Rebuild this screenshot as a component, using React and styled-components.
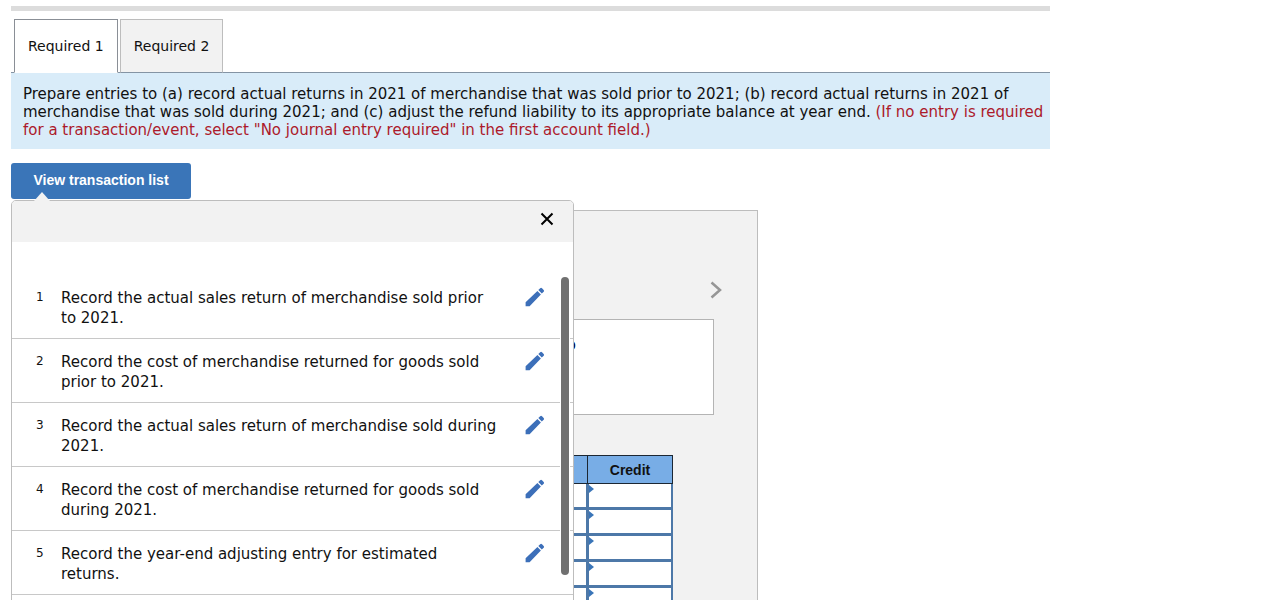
import React from "react";
import styled, { createGlobalStyle } from "styled-components";

const BLUE = "#3a75b8";
const GRID = "#4d78a8";

const GlobalStyle = createGlobalStyle`
  *, *::before, *::after { box-sizing: border-box; }
  body {
    margin: 0;
    background: #fff;
    color: #111;
    font-family: Verdana, "DejaVu Sans", sans-serif;
    font-size: 15px;
  }
  button, input { font: inherit; color: inherit; margin: 0; }
`;

const Page = styled.main`
  height: 100vh;
  overflow: hidden;
  padding: 6px 11px 0;
`;

const Content = styled.div`
  max-width: 1039px;
`;

const Rule = styled.div`
  height: 5px;
  background: #dcdcdc;
`;

const Tabs = styled.div`
  display: flex;
  gap: 2px;
  margin-top: 8px;
  padding-left: 3px;
  border-bottom: 1px solid #8494a4;
`;

const Tab = styled.button`
  height: 54px;
  padding: 0 13px;
  margin-bottom: -1px;
  font-size: 14px;
  white-space: nowrap;
  border: 1px solid ${(p) => (p.$active ? "#8a8f96" : "#bdbdbd")};
  border-bottom-color: ${(p) => (p.$active ? "#fff" : "#8494a4")};
  background: ${(p) => (p.$active ? "#fff" : "#f2f2f2")};
`;

const Instructions = styled.p`
  margin: 0;
  padding: 12px 4px 10px 12px;
  line-height: 18px;
  background: #d9ecf9;
`;

const Hint = styled.span`
  color: #ac1a2b;
`;

const ListAnchor = styled.div`
  position: relative;
  margin-top: 14px;
`;

const ListButton = styled.button`
  display: block;
  width: 180px;
  height: 36px;
  padding: 0 0 2px;
  border: 0;
  border-radius: 3px;
  background: ${BLUE};
  color: #fff;
  font: bold 14px "Liberation Sans", Arial, sans-serif;
`;

const Popover = styled.section`
  position: absolute;
  z-index: 2;
  top: 37px;
  left: 0;
  width: 563px;
  border: 1px solid #bdbdbd;
  border-radius: 5px 5px 0 0;
  background: #fff;

  &::before {
    content: "";
    position: absolute;
    top: -9px;
    left: 22px;
    border: 8px solid transparent;
    border-top: 0;
    border-bottom: 9px solid #f2f2f2;
  }
`;

const PopoverHeader = styled.header`
  display: flex;
  justify-content: flex-end;
  height: 41px;
  padding: 8px 16px;
  border-radius: 4px 4px 0 0;
  background: #f2f2f2;
`;

const IconButton = styled.button`
  display: grid;
  place-items: center;
  width: 20px;
  height: 20px;
  padding: 0;
  border: 0;
  background: none;
`;

const ScrollArea = styled.div`
  position: relative;
  padding-top: 33px;
`;

const ScrollThumb = styled.div`
  position: absolute;
  top: 35px;
  right: 3px;
  width: 10px;
  height: 298px;
  border: solid #fff;
  border-width: 0 1px;
  background: #fff;

  &::after {
    content: "";
    display: block;
    height: 100%;
    border-radius: 4px;
    background: #707070;
  }
`;

const Transactions = styled.ol`
  margin: 0;
  padding: 0;
  list-style: none;
`;

const Transaction = styled.li`
  display: flex;
  align-items: flex-start;
  height: 64px;
  padding: 12px 28px 0 24px;
  border-bottom: 1px solid #c8c8c8;
`;

const Number = styled.span`
  width: 25px;
  padding-top: 1px;
  font-size: 12px;
  line-height: 18px;
`;

const Description = styled.span`
  width: 436px;
  margin-right: auto;
  padding-top: 1px;
  line-height: 20px;
`;

const Worksheet = styled.section`
  width: 747px;
  min-height: 480px;
  margin-top: 11px;
  padding: 69px 31px 0 43px;
  border: 1px solid #bdbdbd;
  background: #f2f2f2;
`;

const Pager = styled.div`
  display: flex;
  justify-content: flex-end;
  height: 39px;
`;

const Prompt = styled.div`
  display: flex;
  height: 96px;
  margin-right: 12px;
  padding: 16px 137px 0 0;
  justify-content: flex-end;
  border: 1px solid #b4b4b4;
  background: #fff;
  color: #000033;
`;

const Journal = styled.table`
  width: 618px;
  margin-top: 40px;
  border-collapse: separate;
  border-spacing: 0;
  table-layout: fixed;
`;

const HeadCell = styled.th`
  width: ${(p) => p.$width || "auto"};
  height: 29px;
  padding: 0;
  border: solid #1c2733;
  border-width: 1px 0 1px 1px;
  background: #78ade6;
  font: bold 14px "Liberation Sans", Arial, sans-serif;

  &:last-child { border-right-width: 1px; }
`;

const Cell = styled.td`
  position: relative;
  height: 26px;
  padding: 0;
  border: solid ${GRID};
  border-width: 0 1px 3px 2px;
  background: #fff;

  &:last-child { border-right-width: 2px; }

  &::before {
    content: "";
    position: absolute;
    top: 1px;
    left: 0;
    border: 4px solid transparent;
    border-left: 5px solid ${BLUE};
    border-right: 0;
  }
`;

const Amount = styled.input`
  display: block;
  width: 100%;
  height: 23px;
  padding: 0 6px;
  border: 0;
  outline: 0;
  background: transparent;
  text-align: right;
`;

const transactions = [
  "Record the actual sales return of merchandise sold prior to 2021.",
  "Record the cost of merchandise returned for goods sold prior to 2021.",
  "Record the actual sales return of merchandise sold during 2021.",
  "Record the cost of merchandise returned for goods sold during 2021.",
  "Record the year-end adjusting entry for estimated returns.",
];

const Pencil = () => (
  <svg width="20" height="20" viewBox="0 0 20 20" aria-hidden="true">
    <path fill="#3c6fb9" d="M.6 19.300v-4L12.400 3.900l3.500 3.500L4.600 19.300zM13.300 3l1.900-1.800q.9-.8 1.800 0l1.700 1.700q.8.900 0 1.800l-1.900 1.800z" />
  </svg>
);

export default function App() {
  return (
    <Page>
      <GlobalStyle />
      <Content>
        <Rule />
        <Tabs role="tablist">
          <Tab role="tab" aria-selected="true" $active>Required 1</Tab>
          <Tab role="tab" aria-selected="false">Required 2</Tab>
        </Tabs>
        <Instructions>
          Prepare entries to (a) record actual returns in 2021 of merchandise that was sold prior to 2021; (b) record
          actual returns in 2021 of merchandise that was sold during 2021; and (c) adjust the refund liability to its
          appropriate balance at year end.{" "}
          <Hint>
            (If no entry is required for a transaction/event, select "No journal entry required" in the first account
            field.)
          </Hint>
        </Instructions>
        <ListAnchor>
          <ListButton>View transaction list</ListButton>
          <Popover>
            <PopoverHeader>
              <IconButton aria-label="Close">
                <svg width="14" height="14" viewBox="0 0 14 14" fill="none" stroke="#000" strokeWidth="2">
                  <path d="M1.500 1.500l11 11M12.500 1.500l-11 11" />
                </svg>
              </IconButton>
            </PopoverHeader>
            <ScrollArea>
              <Transactions>
                {transactions.map((text, i) => (
                  <Transaction key={text}>
                    <Number>{i + 1}</Number>
                    <Description>{text}</Description>
                    <IconButton aria-label={`Edit transaction ${i + 1}`}>
                      <Pencil />
                    </IconButton>
                  </Transaction>
                ))}
                <Transaction />
              </Transactions>
              <ScrollThumb />
            </ScrollArea>
          </Popover>
        </ListAnchor>
        <Worksheet>
          <Pager>
            <IconButton aria-label="Next">
              <svg width="12" height="18" viewBox="0 0 12 18" fill="none" stroke="#969696" strokeWidth="2.500">
                <path d="M1.500 1.500L10 9l-8.500 7.500" />
              </svg>
            </IconButton>
          </Pager>
          <Prompt>o</Prompt>
          <Journal>
            <thead>
              <tr>
                <HeadCell />
                <HeadCell $width="86px">Credit</HeadCell>
              </tr>
            </thead>
            <tbody>
              {[1, 2, 3, 4, 5].map((row) => (
                <tr key={row}>
                  <Cell><Amount aria-label={`Debit, line ${row}`} /></Cell>
                  <Cell><Amount aria-label={`Credit, line ${row}`} /></Cell>
                </tr>
              ))}
            </tbody>
          </Journal>
        </Worksheet>
      </Content>
    </Page>
  );
}
